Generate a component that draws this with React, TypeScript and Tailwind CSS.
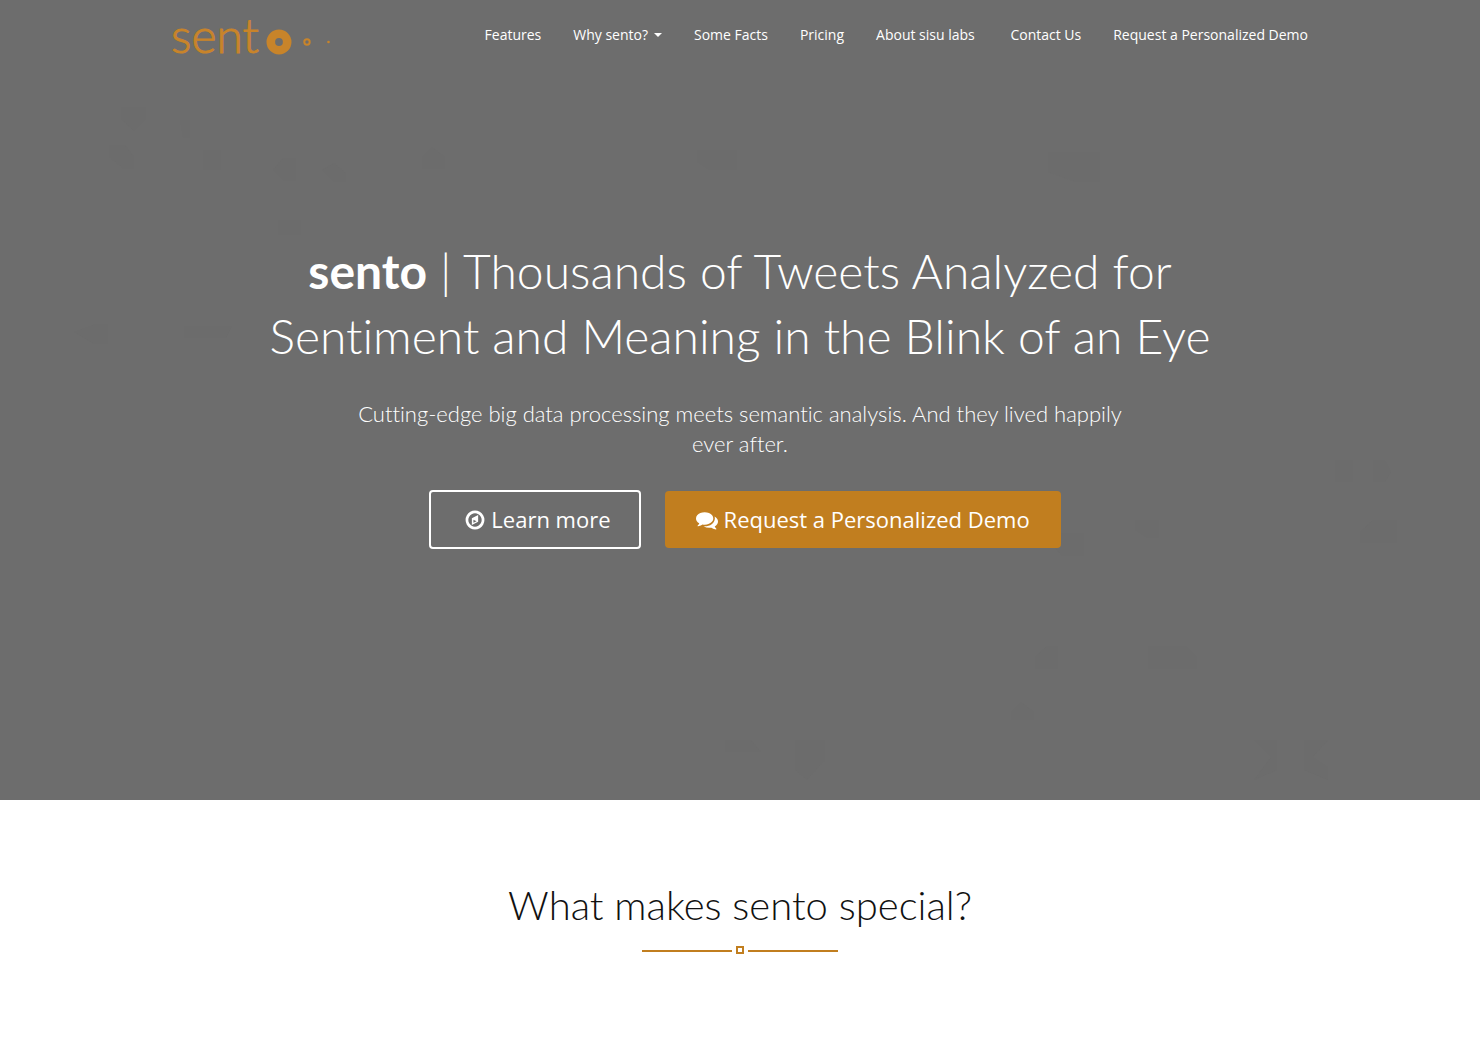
import type { ReactNode } from "react";

const NAV_LINKS = [
  { label: "Features", href: "#features" },
  { label: "Why sento?", href: "#why", dropdown: true },
  { label: "Some Facts", href: "#facts" },
  { label: "Pricing", href: "#pricing" },
  { label: "About sisu labs\u00a0", href: "#about" },
  { label: "Contact Us", href: "#contact" },
  { label: "Request a Personalized Demo", href: "#demo" },
];

function Icon({ children }: { children: ReactNode }) {
  return (
    <svg viewBox="0 0 1792 1792" className="h-[22px] w-[22px] shrink-0 fill-current" aria-hidden="true">
      {children}
    </svg>
  );
}

function CompassIcon() {
  return (
    <Icon>
      <path
        fillRule="evenodd"
        d="M768 1122l256-128-256-128v256zm384-625v542l-512 256v-542zm288 399q0-148-73-273t-198-198-273-73-273 73-198 198-73 273 73 273 198 198 273 73 273-73 198-198 73-273zm224 0q0 209-103 385.500t-279.500 279.500-385.500 103-385.500-103-279.500-279.500-103-385.500 103-385.500 279.500-279.500 385.500-103 385.500 103 279.500 279.500 103 385.500z"
      />
    </Icon>
  );
}

function CommentsIcon() {
  return (
    <Icon>
      <path d="M1408 768q0 139-94 257t-256.500 186.500-353.500 68.500q-86 0-176-16-124 88-278 128-36 9-86 16h-3q-11 0-20.500-8t-11.500-21q-1-3-1-6.500t.5-6.500 2-6l2.500-5 3.500-5.500 4-5 4.500-5 4-4.500q5-6 23-25t26-29.500 22.500-29 25-38.500 20.500-44q-124-72-195-177t-71-224q0-139 94-257t256.500-186.500 353.500-68.500 353.500 68.500 256.500 186.500 94 257zm384 256q0 120-71 224.500t-195 176.500q10 24 20.500 44t25 38.500 22.500 29 26 29.500 23 25q1 1 4 4.500t4.500 5 4 5 3.500 5.500l2.500 5 2 6 .5 6.500-1 6.500q-3 14-13 22t-22 7q-50-7-86-16-154-40-278-128-90 16-176 16-271 0-472-132 58 4 88 4 161 0 309-45t264-129q125-92 192-212t67-254q0-77-23-152 129 71 204 178t75 230z" />
    </Icon>
  );
}

function Logo() {
  return (
    <a href="#top" className="flex items-center text-[#c8842a]" aria-label="sento">
      <span className="font-['Lato',sans-serif] text-[48px] leading-[70px] font-light [-webkit-text-stroke:1px_currentColor]">
        sent
      </span>
      {/* the "o" rolls away into two smaller dots */}
      <svg viewBox="0 0 66 26" className="mt-3.5 ml-[7px] h-[26px] w-[66px]" fill="none" stroke="currentColor" aria-hidden="true">
        <circle cx="13" cy="13" r="8.200" strokeWidth="8.600" />
        <circle cx="41" cy="13" r="2.700" strokeWidth="2" />
        <circle cx="62.500" cy="13" r="1.300" fill="currentColor" stroke="none" />
      </svg>
    </a>
  );
}

function Header() {
  return (
    <header className="relative mx-auto flex h-[70px] w-full max-w-[1170px] items-start justify-between pl-4">
      <Logo />
      <nav className="flex gap-0.5 pr-0.5">
        {NAV_LINKS.map((link) => (
          <a key={link.label} href={link.href} className="flex items-center px-[15px] py-[25px] text-sm whitespace-nowrap">
            {link.label}
            {link.dropdown && (
              <span className="ml-1.5 border-x-4 border-t-4 border-x-transparent border-t-white" />
            )}
          </a>
        ))}
      </nav>
    </header>
  );
}

// Barely visible fragments printed on the hero backdrop
function Backdrop() {
  return (
    <svg
      viewBox="0 0 1480 800"
      preserveAspectRatio="xMidYMid slice"
      className="absolute inset-0 h-full w-full fill-[#6c6c6c]"
      aria-hidden="true"
    >
      <path d="M121 107h25v12l-12 12-13-12zM180 120h10v18h-7zM109 145h16l9 12v12h-10l-15-12zM203 150h18v20h-18zM273 170l10-12h13v23h-12zM322 170l12-7 12 10v9h-12zM422 157l10-10 13 10v12h-23z" />
      <path d="M278 220h23v15h-23zM74 332l22-8h12v20h-14zM184 326h48l-6 12h-42zM697 150h40v20h-28l-12-8zM1048 152h52v30h-24l-28-10z" />
      <path d="M1335 460h18v22h-18zM1373 460h12l6 12-6 10h-12zM1135 520h24v18h-12l-12-8zM1055 533h29v23h-22l-7-8zM1360 532l13-12h24v23h-37z" />
      <path d="M1035 657l12-11h11v23h-23zM1148 646h38l11 11v12h-49zM1011 712l10-10 13 10v8h-23zM1254 740h23v30l-23 10 17-23zM1304 740h24l-15 17 15 10v13l-24-10zM725 740h26l10 12h-36zM795 740h30v20l-18 20-12-10z" />
    </svg>
  );
}

function Hero() {
  return (
    <section id="top" className="relative min-h-[800px] bg-[#6d6d6d] text-white">
      <Backdrop />
      <Header />
      <div className="relative mx-auto flex max-w-[970px] flex-col items-center gap-[31px] pt-[168px] text-center">
        <h1 className="font-['Lato',sans-serif] text-[48px] leading-[65px] font-light [font-variant-ligatures:none]">
          <strong className="font-bold">sento</strong> | Thousands of Tweets Analyzed for Sentiment and Meaning in the
          Blink of an Eye
        </h1>
        <p className="max-w-[780px] font-['Lato',sans-serif] text-[22px] leading-[30px] font-light [font-variant-ligatures:none]">
          Cutting-edge big data processing meets semantic analysis. And they lived happily ever after.
        </p>
        <div className="flex items-center gap-6 pl-[10px] text-[22px] leading-[31px]">
          <button type="button" className="flex items-center gap-[5px] rounded border-2 border-white py-3 pr-7 pl-[33px]">
            <CompassIcon />
            Learn more
          </button>
          <button type="button" className="flex items-center gap-1.5 rounded bg-[#c17e1f] px-[31px] py-[13px]">
            <CommentsIcon />
            Request a Personalized Demo
          </button>
        </div>
      </div>
    </section>
  );
}

function Special() {
  return (
    <section id="features" className="flex flex-col items-center bg-white py-[79px] text-[#111]">
      <h2 className="font-['Lato',sans-serif] text-[40px] leading-[52px] font-light">What makes sento special?</h2>
      <div className="mt-[15px] flex items-center gap-1" aria-hidden="true">
        <span className="mt-0.5 h-0.5 w-[90px] bg-[#c17e1f]" />
        <span className="h-2 w-2 border-2 border-[#c17e1f]" />
        <span className="mt-0.5 h-0.5 w-[90px] bg-[#c17e1f]" />
      </div>
    </section>
  );
}

export default function App() {
  return (
    <main className="min-h-screen bg-white font-['Open_Sans',sans-serif]">
      <Hero />
      <Special />
    </main>
  );
}
